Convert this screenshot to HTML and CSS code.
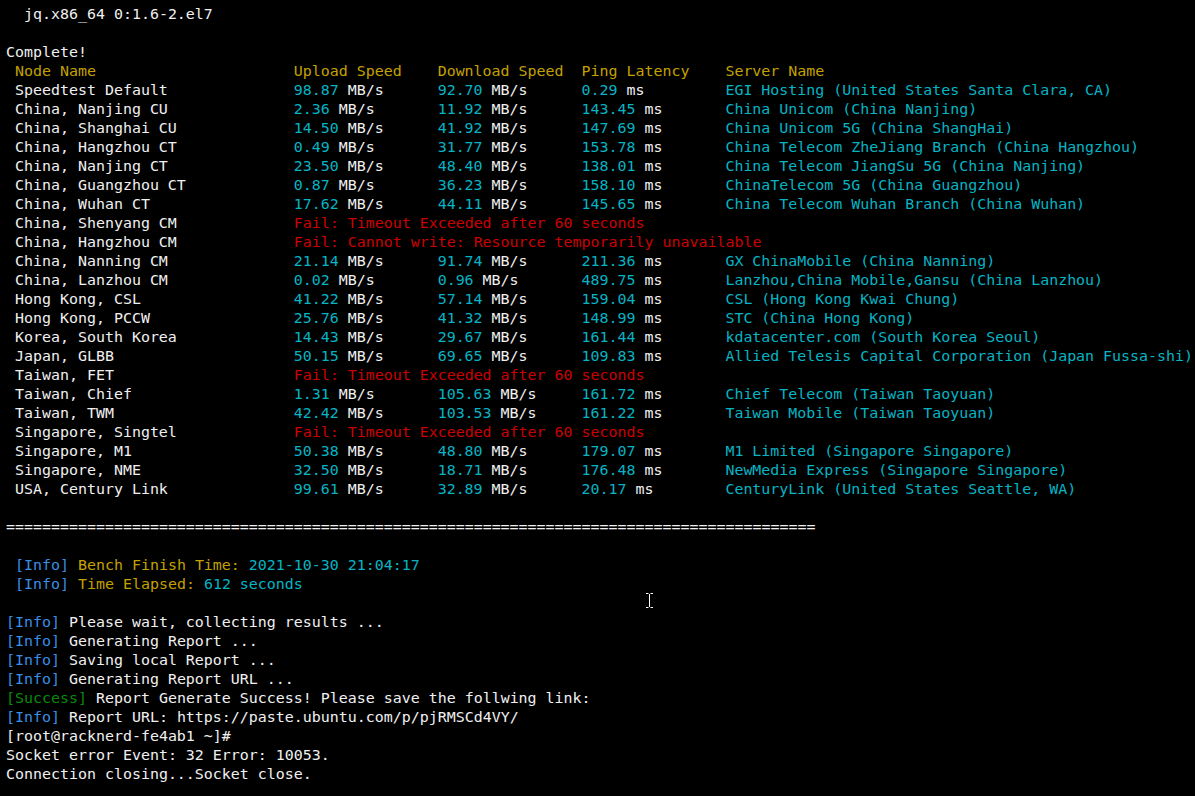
FILE: index.html
```html
<!DOCTYPE html>
<html>

<head>
  <meta charset="UTF-8">
  <title>Superbench - Terminal</title>
  <link rel="stylesheet" href="styles.css">
</head>

<body>

  <div id="terminal">
    <div class="line">  jq.x86_64 0:1.6-2.el7</div>
    <div class="line"> </div>
    <div class="line">Complete!</div>

    <div class="row head">
      <span>Node Name</span><span>Upload Speed</span><span>Download Speed</span><span>Ping Latency</span><span>Server Name</span>
    </div>
    <div class="row">
      <span>Speedtest Default</span><span><i class="c">98.87</i> MB/s</span><span><i class="c">92.70</i> MB/s</span><span><i class="c">0.29</i> ms</span><span class="c">EGI Hosting (United States Santa Clara, CA)</span>
    </div>
    <div class="row">
      <span>China, Nanjing CU</span><span><i class="c">2.36</i> MB/s</span><span><i class="c">11.92</i> MB/s</span><span><i class="c">143.45</i> ms</span><span class="c">China Unicom (China Nanjing)</span>
    </div>
    <div class="row">
      <span>China, Shanghai CU</span><span><i class="c">14.50</i> MB/s</span><span><i class="c">41.92</i> MB/s</span><span><i class="c">147.69</i> ms</span><span class="c">China Unicom 5G (China ShangHai)</span>
    </div>
    <div class="row">
      <span>China, Hangzhou CT</span><span><i class="c">0.49</i> MB/s</span><span><i class="c">31.77</i> MB/s</span><span><i class="c">153.78</i> ms</span><span class="c">China Telecom ZheJiang Branch (China Hangzhou)</span>
    </div>
    <div class="row">
      <span>China, Nanjing CT</span><span><i class="c">23.50</i> MB/s</span><span><i class="c">48.40</i> MB/s</span><span><i class="c">138.01</i> ms</span><span class="c">China Telecom JiangSu 5G (China Nanjing)</span>
    </div>
    <div class="row">
      <span>China, Guangzhou CT</span><span><i class="c">0.87</i> MB/s</span><span><i class="c">36.23</i> MB/s</span><span><i class="c">158.10</i> ms</span><span class="c">ChinaTelecom 5G (China Guangzhou)</span>
    </div>
    <div class="row">
      <span>China, Wuhan CT</span><span><i class="c">17.62</i> MB/s</span><span><i class="c">44.11</i> MB/s</span><span><i class="c">145.65</i> ms</span><span class="c">China Telecom Wuhan Branch (China Wuhan)</span>
    </div>
    <div class="row">
      <span>China, Shenyang CM</span><span class="fail">Fail: Timeout Exceeded after 60 seconds</span>
    </div>
    <div class="row">
      <span>China, Hangzhou CM</span><span class="fail">Fail: Cannot write: Resource temporarily unavailable</span>
    </div>
    <div class="row">
      <span>China, Nanning CM</span><span><i class="c">21.14</i> MB/s</span><span><i class="c">91.74</i> MB/s</span><span><i class="c">211.36</i> ms</span><span class="c">GX ChinaMobile (China Nanning)</span>
    </div>
    <div class="row">
      <span>China, Lanzhou CM</span><span><i class="c">0.02</i> MB/s</span><span><i class="c">0.96</i> MB/s</span><span><i class="c">489.75</i> ms</span><span class="c">Lanzhou,China Mobile,Gansu (China Lanzhou)</span>
    </div>
    <div class="row">
      <span>Hong Kong, CSL</span><span><i class="c">41.22</i> MB/s</span><span><i class="c">57.14</i> MB/s</span><span><i class="c">159.04</i> ms</span><span class="c">CSL (Hong Kong Kwai Chung)</span>
    </div>
    <div class="row">
      <span>Hong Kong, PCCW</span><span><i class="c">25.76</i> MB/s</span><span><i class="c">41.32</i> MB/s</span><span><i class="c">148.99</i> ms</span><span class="c">STC (China Hong Kong)</span>
    </div>
    <div class="row">
      <span>Korea, South Korea</span><span><i class="c">14.43</i> MB/s</span><span><i class="c">29.67</i> MB/s</span><span><i class="c">161.44</i> ms</span><span class="c">kdatacenter.com (South Korea Seoul)</span>
    </div>
    <div class="row">
      <span>Japan, GLBB</span><span><i class="c">50.15</i> MB/s</span><span><i class="c">69.65</i> MB/s</span><span><i class="c">109.83</i> ms</span><span class="c">Allied Telesis Capital Corporation (Japan Fussa-shi)</span>
    </div>
    <div class="row">
      <span>Taiwan, FET</span><span class="fail">Fail: Timeout Exceeded after 60 seconds</span>
    </div>
    <div class="row">
      <span>Taiwan, Chief</span><span><i class="c">1.31</i> MB/s</span><span><i class="c">105.63</i> MB/s</span><span><i class="c">161.72</i> ms</span><span class="c">Chief Telecom (Taiwan Taoyuan)</span>
    </div>
    <div class="row">
      <span>Taiwan, TWM</span><span><i class="c">42.42</i> MB/s</span><span><i class="c">103.53</i> MB/s</span><span><i class="c">161.22</i> ms</span><span class="c">Taiwan Mobile (Taiwan Taoyuan)</span>
    </div>
    <div class="row">
      <span>Singapore, Singtel</span><span class="fail">Fail: Timeout Exceeded after 60 seconds</span>
    </div>
    <div class="row">
      <span>Singapore, M1</span><span><i class="c">50.38</i> MB/s</span><span><i class="c">48.80</i> MB/s</span><span><i class="c">179.07</i> ms</span><span class="c">M1 Limited (Singapore Singapore)</span>
    </div>
    <div class="row">
      <span>Singapore, NME</span><span><i class="c">32.50</i> MB/s</span><span><i class="c">18.71</i> MB/s</span><span><i class="c">176.48</i> ms</span><span class="c">NewMedia Express (Singapore Singapore)</span>
    </div>
    <div class="row">
      <span>USA, Century Link</span><span><i class="c">99.61</i> MB/s</span><span><i class="c">32.89</i> MB/s</span><span><i class="c">20.17</i> ms</span><span class="c">CenturyLink (United States Seattle, WA)</span>
    </div>

    <div class="line"> </div>
    <div class="line">==========================================================================================</div>
    <div class="line"> </div>
    <div class="line"> <i class="b">[Info]</i> <i class="y">Bench Finish Time:</i> <i class="c">2021-10-30 21:04:17</i></div>
    <div class="line"> <i class="b">[Info]</i> <i class="y">Time Elapsed:</i> <i class="c">612 seconds</i></div>
    <div class="line"> </div>
    <div class="line"><i class="b">[Info]</i> Please wait, collecting results ...</div>
    <div class="line"><i class="b">[Info]</i> Generating Report ...</div>
    <div class="line"><i class="b">[Info]</i> Saving local Report ...</div>
    <div class="line"><i class="b">[Info]</i> Generating Report URL ...</div>
    <div class="line"><i class="g">[Success]</i> Report Generate Success! Please save the follwing link:</div>
    <div class="line"><i class="b">[Info]</i> Report URL: https://paste.ubuntu.com/p/pjRMSCd4VY/</div>
    <div class="line">[root@racknerd-fe4ab1 ~]#</div>
    <div class="line">Socket error Event: 32 Error: 10053.</div>
    <div class="line">Connection closing...Socket close.</div>

    <!-- mouse text cursor -->
    <svg class="ibeam" width="9" height="17" viewBox="0 0 9 17">
      <path d="M1 1.5h2.5M5.5 1.5H8M4.5 2v13M1 15.5h2.5M5.5 15.5H8" stroke="#fff" stroke-width="1" fill="none" />
    </svg>
  </div>

</body>

</html>
```

FILE: styles.css
```css
body {
  margin: 0;
  padding: 0;
  background-color: #000;
  overflow: hidden;
}

#terminal {
  position: relative;
  height: 796px;
  padding: 5px 0 0 6px;
  box-sizing: border-box;
  font-family: 'DejaVu Sans Mono', 'Liberation Mono', monospace;
  font-size: 14.95px;
  line-height: 19px;
  color: #f0f0f0;
  overflow: hidden;
}

#terminal i {
  font-style: normal;
}

.line {
  height: 19px;
  white-space: pre;
}

.row {
  display: grid;
  grid-template-columns: 31ch 16ch 16ch 16ch auto;
  padding-left: 1ch;
  height: 19px;
}

.row span {
  white-space: pre;
}

.row.head {
  color: #c4a000;
}

.fail {
  grid-column: 2 / -1;
  color: #cc0000;
}

.c {
  color: #06b4c4;
}

.y {
  color: #c4a000;
}

.b {
  color: #3a8ee6;
}

.g {
  color: #0a8a0a;
}

.ibeam {
  position: absolute;
  left: 645px;
  top: 592px;
}
```
